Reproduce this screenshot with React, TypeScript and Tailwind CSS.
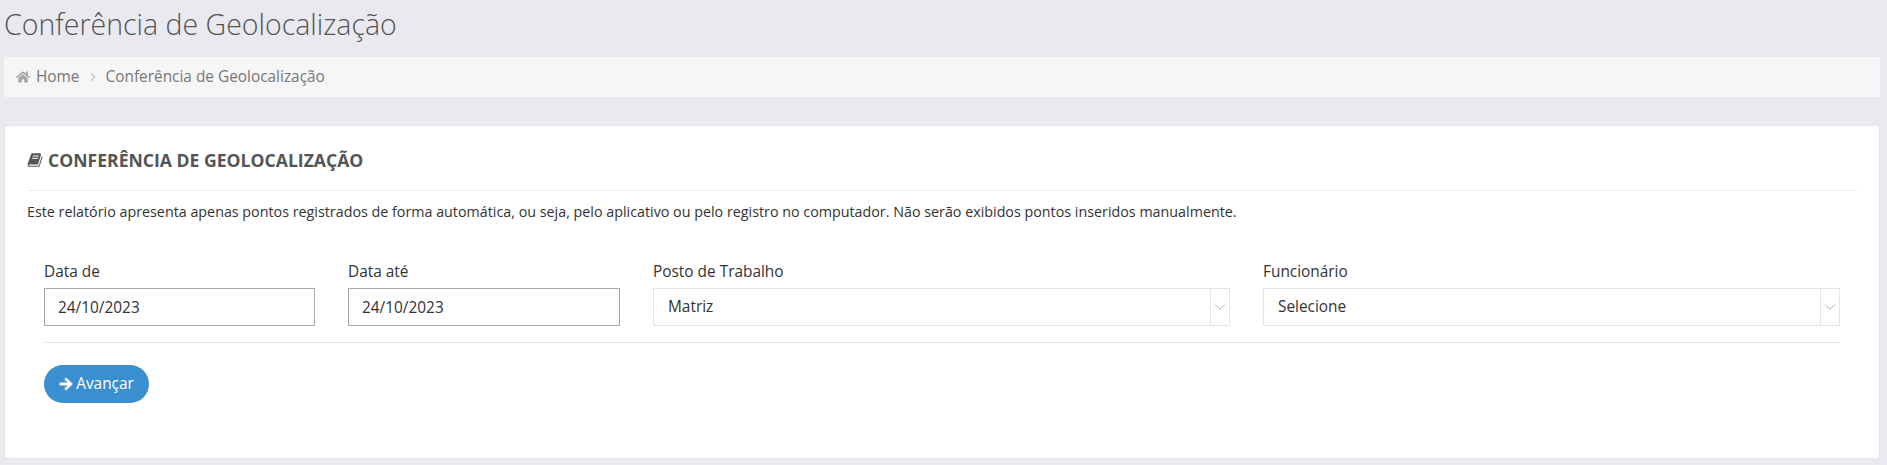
import { FaArrowRight, FaHome } from 'react-icons/fa'
import { ChevronDown, ChevronRight } from 'lucide-react'

function BookIcon() {
  return (
    <svg viewBox="0 0 1792 1792" className="w-[16px] h-[16px] mr-[5px] shrink-0" fill="currentColor">
      <path d="M1703 478q40 57 18 129l-275 906q-19 64-76.5 107.5t-122.5 43.5h-923q-77 0-148.5-53.5t-99.5-131.5q-24-67-2-127 0-4 3-27t4-37q1-8-3-21.5t-3-19.5q2-11 8-21t16.5-23.5 16.5-23.5q23-38 45-91.5t30-91.5q3-10 .5-30t-.5-28q3-11 17-28t17-23q21-36 42-92t25-90q1-9-2.5-32t.5-28q4-13 22-30.5t22-22.5q19-26 42.5-84.5t27.5-96.5q1-8-3-25.5t-2-26.5q2-8 9-18t18-23 17-21q8-12 16.5-30.5t15-35 16-36 19.5-32 26.5-23.5 36-11.5 47.5 5.5l-1 3q38-9 51-9h761q74 0 114 56t18 130l-274 906q-36 119-71.5 153.5t-128.5 34.5h-869q-27 0-38 15-11 16-1 43 24 70 144 70h923q29 0 56-15.5t35-41.5l300-987q7-22 5-57 38 15 59 43zm-1064 2q-4 13 2 22.5t20 9.5h608q13 0 25.5-9.5t16.5-22.5l21-64q4-13-2-22.5t-20-9.5h-608q-13 0-25.5 9.5t-16.5 22.5zm-83 256q-4 13 2 22.5t20 9.5h608q13 0 25.5-9.5t16.5-22.5l21-64q4-13-2-22.5t-20-9.5h-608q-13 0-25.5 9.5t-16.5 22.5z" />
    </svg>
  )
}

function DateField({ label, value }: { label: string; value: string }) {
  return (
    <div>
      <label className="block h-[20px] mb-[8px] pt-[2px] text-[15.4px] leading-[20px] text-[#333]">{label}</label>
      <div className="h-[38px] border border-[#a9a9a9] bg-white pl-[13px] text-[15.4px] leading-[38px] text-[#333]">
        {value}
      </div>
    </div>
  )
}

function SelectField({ label, value }: { label: string; value: string }) {
  return (
    <div>
      <label className="block h-[20px] mb-[8px] pt-[2px] text-[15.4px] leading-[20px] text-[#333]">{label}</label>
      <div className="h-[38px] flex border border-[#e5e5e5] bg-white text-[15.4px] leading-[36px] text-[#333]">
        <div className="flex-1 pl-[14px]">{value}</div>
        <div className="w-[19px] border-l border-[#e5e5e5] flex items-center justify-center">
          <ChevronDown className="w-[18px] h-[18px] shrink-0 text-[#aaa]" strokeWidth={1.2} />
        </div>
      </div>
    </div>
  )
}

export default function App() {
  return (
    <div className="w-[1887px] h-[465px] overflow-hidden bg-[#e9e9ef] pl-[4px] pr-[7px] font-['Open_Sans',sans-serif]">
      <h1 className="h-[57px] pt-[3px] text-[28.5px] leading-[42px] font-light text-[#555]">
        Conferência de Geolocalização
      </h1>

      {/* Breadcrumb */}
      <div className="h-[40px] flex items-center bg-[#f6f6f6] pl-[12px] pb-[1px] text-[15.4px] text-[#777]">
        <FaHome className="w-[14px] h-[14px] text-[#a5a5a5] mr-[6px]" />
        <span>Home</span>
        <ChevronRight className="w-[14px] h-[14px] text-[#999] ml-[6px] mr-[6px]" strokeWidth={1.5} />
        <span>Conferência de Geolocalização</span>
      </div>

      {/* Card */}
      <div className="mt-[28px] h-[334px] bg-white border border-[#e3e3e8] px-[22px]">
        <div className="h-[65px] flex items-center border-b border-[#eeeeee] pt-[4px] text-[#555]">
          <BookIcon />
          <h2 className="text-[17.6px] font-bold leading-[22px]">CONFERÊNCIA DE GEOLOCALIZAÇÃO</h2>
        </div>
        <p className="mt-[11px] text-[14.3px] leading-[20px] text-[#333]">
          Este relatório apresenta apenas pontos registrados de forma automática, ou seja, pelo aplicativo ou pelo registro no computador. Não serão exibidos pontos inseridos manualmente.
        </p>

        <div className="mt-[38px] mx-[17px] w-[1796px]">
          <div className="grid grid-cols-[271px_272px_577px_577px] gap-x-[33px] pb-[16px] border-b border-[#e5e5e5]">
            <DateField label="Data de" value="24/10/2023" />
            <DateField label="Data até" value="24/10/2023" />
            <SelectField label="Posto de Trabalho" value="Matriz" />
            <SelectField label="Funcionário" value="Selecione" />
          </div>
          <button className="mt-[22px] w-[105px] h-[38px] flex items-center justify-center rounded-full bg-[#3a8fd0] text-white text-[15.4px]">
            <FaArrowRight className="w-[14px] h-[14px] mr-[3px] stroke-white stroke-[30px]" />
            Avançar
          </button>
        </div>
      </div>
    </div>
  )
}
